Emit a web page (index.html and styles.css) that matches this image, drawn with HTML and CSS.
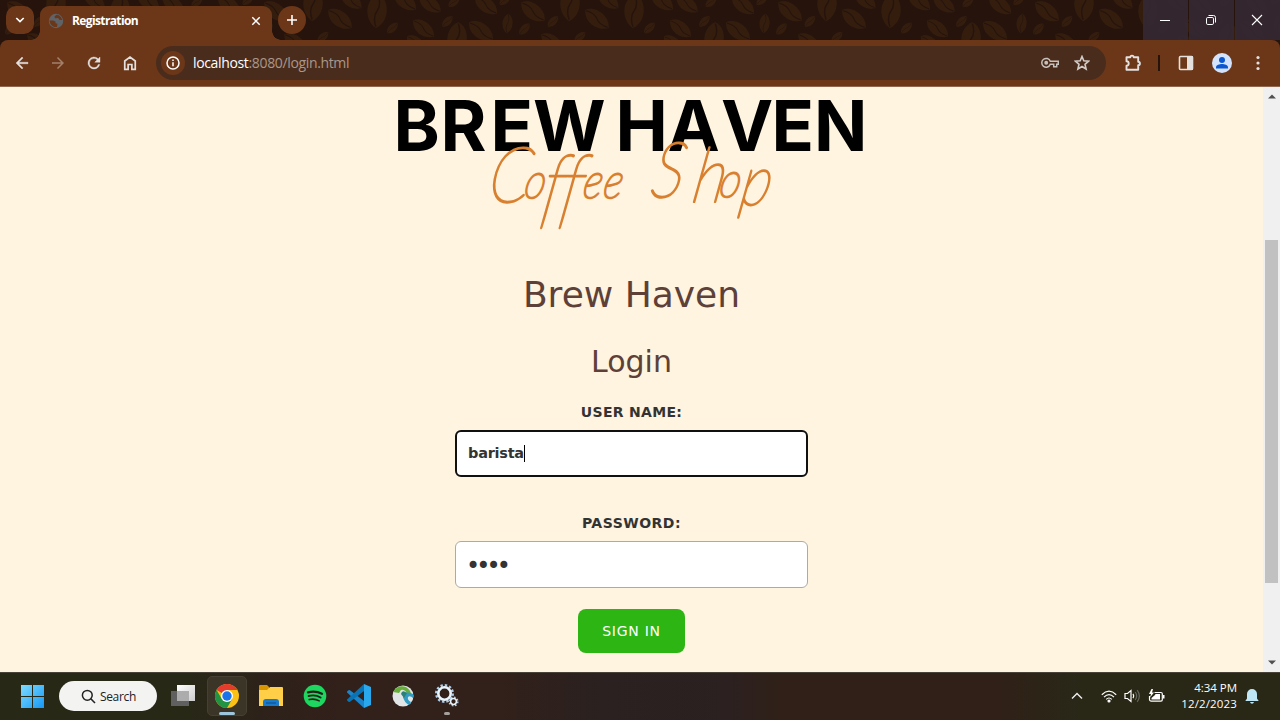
FILE: index.html
```
<!DOCTYPE html>
<html lang="en">
<head>
<meta charset="utf-8">
<title>Registration</title>
<link rel="stylesheet" href="styles.css">
</head>
<body>
<header class="tabstrip">
  <svg class="beans" width="1280" height="48" viewBox="0 0 1280 48">
    <defs>
      <g id="bean"><path d="M-14 0C-10-9 8-10 14 0C8 9-8 10-14 0Z" fill="#351d0e"/><path d="M-13 0Q-5-3 0 0T13 0" fill="none" stroke="#25130c" stroke-width="1.2"/></g>
      <pattern id="tile" x="400" y="0" width="257" height="48" patternUnits="userSpaceOnUse">
        <use href="#bean" transform="translate(23.5 28.5) rotate(38) scale(.93)"/>
        <use href="#bean" transform="translate(47.5 21.5) rotate(-45) scale(.5)"/>
        <use href="#bean" transform="translate(57 39) rotate(95) scale(1.2 1.35)"/>
        <use href="#bean" transform="translate(81 31) rotate(36) scale(1.04)"/>
        <use href="#bean" transform="translate(107.5 23.5) rotate(95) scale(.7)"/>
        <use href="#bean" transform="translate(124.5 29) rotate(-47) scale(.52)"/>
        <use href="#bean" transform="translate(133 11.5) rotate(38) scale(1.05)"/>
        <use href="#bean" transform="translate(153 21.5) rotate(-45) scale(.5)"/>
        <use href="#bean" transform="translate(170 4) rotate(93) scale(1.22 1.35)"/>
        <use href="#bean" transform="translate(197 19) rotate(38) scale(1.05)"/>
        <use href="#bean" transform="translate(180 37) rotate(-42) scale(.5)"/>
        <use href="#bean" transform="translate(234 11) rotate(94) scale(1.22 1.35)"/>
        <use href="#bean" transform="translate(249.5 28) rotate(-45) scale(.52)"/>
        <use href="#bean" transform="translate(152 42) rotate(36) scale(.93)"/>
        <use href="#bean" transform="translate(208 0) rotate(38) scale(.93)"/>
        <use href="#bean" transform="translate(86 5) rotate(38) scale(.98)"/>
        <use href="#bean" transform="translate(54 2) rotate(-42) scale(.5)"/>
        <use href="#bean" transform="translate(30 4) rotate(36) scale(.93)"/>
        <use href="#bean" transform="translate(5 1) rotate(38) scale(.98)"/>
        <use href="#bean" transform="translate(262 1) rotate(38) scale(.98)"/>
        <use href="#bean" transform="translate(105 0) rotate(-42) scale(.5)"/>
        <use href="#bean" transform="translate(16 43) rotate(36) scale(.8)"/>
      </pattern>
    </defs>
    <rect width="1280" height="48" fill="#25130c"/><rect width="1280" height="48" fill="url(#tile)"/>
  </svg>
  <div class="tabsearch"><svg width="10" height="6" viewBox="0 0 10 6"><path d="M1.3 1L5 4.6L8.7 1" fill="none" stroke="#fff" stroke-width="1.7"/></svg></div>
  <div class="tab">
    <svg class="globe" width="16" height="16" viewBox="0 0 16 16"><circle cx="8" cy="8" r="7.2" fill="#5f6368"/><path d="M1.500 7.500h3.500l2.500 1v1.800l2 .5-.5 3.200c-3 .6-7-1.500-7.500-6.500zM8.500 1.800L6.500 3.500 7 5.200l3.200-.2 1 1.800 3 .2C13.500 3.800 11 1.800 8.500 1.800z" fill="#6c3718"/></svg>
    <span class="tabtitle">Registration</span>
    <svg width="10" height="10" viewBox="0 0 10 10"><path d="M1.300 1.300l7.400 7.400M8.700 1.300L1.300 8.700" stroke="#fff" stroke-width="1.500"/></svg>
  </div>
  <div class="newtab"><svg width="12" height="12" viewBox="0 0 12 12"><path d="M6 1v10M1 6h10" stroke="#fff" stroke-width="1.600"/></svg></div>
  <div class="winctl">
    <div class="wbtn"><svg width="12" height="12" viewBox="0 0 12 12"><path d="M1 6.500h10" stroke="#fff"/></svg></div>
    <div class="wbtn"><svg width="12" height="12" viewBox="0 0 12 12" fill="none" stroke="#fff"><rect x="1.500" y="3.500" width="7" height="7" rx="1.300"/><path d="M3.500 1.500h5a2 2 0 0 1 2 2v5"/></svg></div>
    <div class="wbtn"><svg width="12" height="12" viewBox="0 0 12 12"><path d="M1 1l10 10M11 1L1 11" stroke="#fff" stroke-width="1.100"/></svg></div>
  </div>
</header>
<nav class="toolbar">
  <svg class="nav" viewBox="0 0 24 24"><path d="M20 11H7.830l5.590-5.590L12 4l-8 8 8 8 1.410-1.410L7.830 13H20z" fill="#e4e0de" stroke="#e4e0de" stroke-width=".5"/></svg>
  <svg class="nav" viewBox="0 0 24 24"><path d="M12 4l-1.410 1.410L16.170 11H4v2h12.170l-5.580 5.590L12 20l8-8z" fill="#a4806b"/></svg>
  <svg class="nav" viewBox="0 0 24 24"><path d="M17.650 6.350A8 8 0 1 0 19.730 14h-2.080A6 6 0 1 1 12 6c1.660 0 3.140.69 4.220 1.780L13 11h7V4z" fill="#e4e0de" stroke="#e4e0de" stroke-width=".5"/></svg>
  <svg class="nav" viewBox="0 0 24 24"><path d="M5 9.300L12 4l7 5.300V20.500h-4.500v-6.500h-5v6.500H5z" fill="none" stroke="#e4e0de" stroke-width="2.300"/></svg>
  <div class="omni">
    <span class="info"><svg width="14" height="14" viewBox="0 0 14 14"><circle cx="7" cy="7" r="6" fill="none" stroke="#fff" stroke-width="1.500"/><path d="M7 6.300v4M7 3.500v1.500" stroke="#fff" stroke-width="1.500"/></svg></span>
    <span class="url"><b>localhost</b>:8080/login.html</span>
    <svg class="key" width="18" height="12" viewBox="0 0 18 12" fill="none" stroke="#c9c1bc" stroke-width="1.500"><path d="M9.300 4.300H17.300v3h-1.600v2.500h-3V7.300H9.300A4.400 4.400 0 1 1 9.300 4.300z"/><circle cx="5.200" cy="5.800" r="1.200" fill="#c9c1bc"/></svg>
    <svg width="16" height="16" viewBox="0 0 16 16"><path d="M8 1.500l1.800 4.300 4.700.4L11 9.300l1.100 4.700L8 11.500 3.900 14 5 9.300 1.500 6.200l4.700-.4z" fill="none" stroke="#d3cbc6" stroke-width="1.600"/></svg>
  </div>
  <svg class="ext" width="18" height="18" viewBox="0 0 18 18"><path d="M2.500 3.300h3.800a1.700 1.700 0 0 1 3.400 0h4.500v4.500a1.700 1.700 0 0 1 0 3.400v4.500H2.500v-4a2.200 2.200 0 0 0 0-4.400z" fill="none" stroke="#e4e0de" stroke-width="1.900" stroke-linejoin="round"/></svg>
  <span class="divider"></span>
  <svg class="side" width="16" height="16" viewBox="0 0 16 16"><rect x="1.500" y="1.500" width="13" height="13" rx="1" fill="none" stroke="#e4e0de" stroke-width="1.600"/><path d="M9 1h6v14H9z" fill="#e4e0de"/></svg>
  <svg class="avatar" width="20" height="20" viewBox="0 0 20 20"><circle cx="10" cy="10" r="10" fill="#d3e3fd"/><circle cx="10" cy="7" r="3" fill="#0b57d0"/><path d="M4 15.500v-1.300C4 12 7.500 11 10 11s6 1 6 3.200v1.300z" fill="#0b57d0"/></svg>
  <svg class="more" width="4" height="16" viewBox="0 0 4 16" fill="#e4e0de"><circle cx="2" cy="2.500" r="1.600"/><circle cx="2" cy="8" r="1.600"/><circle cx="2" cy="13.500" r="1.600"/></svg>
</nav>
<div class="viewport">
  <main class="page">
    <svg class="logo" width="487" height="154" viewBox="388 87 487 154">
      <text class="brand" x="393.500 440.500 490.500 533" y="152">BREW</text>
      <text class="brand" x="615.500 667.500 721 771.500 814" y="152">HAVEN</text>
      <text class="script" transform="translate(486 203) skewX(-10) scale(.84 1)">C<tspan class="low" x="43" dy="-4">o</tspan><tspan class="tall" x="66 88" dy="19">ff</tspan><tspan class="low" x="113 137" dy="-19">ee</tspan></text>
      <text class="script" transform="translate(649 198) skewX(-10) scale(.85 1)">S<tspan class="cap" x="50" dy="5">h</tspan><tspan class="low" x="81" dy="-5">o</tspan><tspan class="pee" x="107" dy="8">p</tspan></text>
    </svg>
    <h1>Brew Haven</h1>
    <h2>Login</h2>
    <label>USER NAME:</label>
    <div class="field focus"><span class="val">barista</span><i class="caret"></i></div>
    <label class="second">PASSWORD:</label>
    <div class="field"><span class="dots">••••</span></div>
    <button>SIGN IN</button>
  </main>
  <aside class="scroll">
    <svg width="8" height="5" viewBox="0 0 8 5"><path d="M0 4.500L4 .5l4 4z" fill="#505050"/></svg>
    <div class="thumb"></div>
    <svg width="8" height="5" viewBox="0 0 8 5"><path d="M0 .5L4 4.500l4-4z" fill="#505050"/></svg>
  </aside>
</div>
<footer class="taskbar">
  <svg class="win" width="24" height="24" viewBox="0 0 24 24"><defs><linearGradient id="wg" x2="1" y2="1" gradientUnits="objectBoundingBox"><stop stop-color="#7ddcff"/><stop offset="1" stop-color="#1698f5"/></linearGradient></defs><path d="M1 1h11v11H1zM13 1h11v11H13zM1 13h11v11H1zM13 13h11v11H13z" fill="url(#wg)"/></svg>
  <div class="search"><svg width="15" height="15" viewBox="0 0 15 15"><circle cx="6.300" cy="6.300" r="4.900" fill="none" stroke="#222" stroke-width="1.500"/><path d="M9.800 9.800l4.200 4.200" stroke="#222" stroke-width="1.600"/></svg><span>Search</span></div>
  <svg class="tv" width="24" height="24" viewBox="0 0 24 24"><defs><linearGradient id="tg" x2="1" y2="1"><stop stop-color="#fff"/><stop offset="1" stop-color="#ccc"/></linearGradient></defs><path d="M6 1h18v16H6z" fill="url(#tg)"/><path d="M0 7h18v15H0z" fill="#606060"/><path d="M6 7h12v10H6z" fill="#acacac"/></svg>
  <div class="active">
    <svg width="24" height="24" viewBox="0 0 24 24"><circle cx="12" cy="12" r="12" fill="#fbc116"/><path d="M12 12L1.600 6A12 12 0 0 1 22.400 6H12z" fill="#e33b2e"/><path d="M1.600 6A12 12 0 0 0 12 24l5.200-9L12 12 6.800 15z" fill="#229342"/><circle cx="12" cy="12" r="6" fill="#fff"/><circle cx="12" cy="12" r="4.700" fill="#1a73e8"/></svg>
    <i></i>
  </div>
  <svg class="app" width="24" height="24" viewBox="0 0 24 24"><path d="M0 2q0-1 1-1h7l2 2v4H0z" fill="#d99500"/><path d="M0 6h8l3-3h12q1 0 1 1v18H0z" fill="#ffcf48"/><path d="M4 22v-4q0-3 3-3h10q3 0 3 3v4z" fill="#1979ca"/><path d="M7 19h10" stroke="#115b9e" stroke-width="1.500"/></svg>
  <svg class="app" width="24" height="24" viewBox="0 0 24 24"><circle cx="12" cy="12" r="11.300" fill="#1ed760"/><g fill="none" stroke="#24201a" stroke-linecap="round"><path d="M5 8.300q7.500-2 14 1.500" stroke-width="2.300"/><path d="M5.600 12q6.500-1.800 12 1.500" stroke-width="1.900"/><path d="M6.200 15.600q5.400-1.400 10 1.300" stroke-width="1.600"/></g></svg>
  <svg class="app" width="24" height="24" viewBox="0 0 24 24"><path d="M17 17L3 6.200q-.8-.5-1.500 0L.3 7.300q-.6.700 0 1.400L17 24z" fill="#1a85cc"/><path d="M17 0L.3 15.300q-.6.700 0 1.400l1.200 1.100q.7.500 1.500 0L17 7z" fill="#0873b5"/><path d="M17 0l7 3v18l-7 3z" fill="#29a8ee"/></svg>
  <svg class="app" width="24" height="24" viewBox="0 0 24 24"><circle cx="12" cy="12" r="10.500" fill="#e1e5e5"/><path d="M2 8Q7 0 15 3q5 3 5 8l-4-1q-2-5-6-4L8 9z" fill="#67ad39"/><path d="M22 10q-9-4-10 3 1 5 6 8l2-3q-4-2-3-5 2-2 5 1z" fill="#329bc2"/><path d="M10 10q1-5 6-1l-3 5z" fill="#2b817a"/></svg>
  <div class="gears"><svg width="24" height="24" viewBox="0 0 24 24" fill="none"><circle cx="9.500" cy="9.500" r="8.300" stroke="#a9cdea" stroke-width="2.400" stroke-dasharray="2.400 1.950"/><circle cx="9.500" cy="9.500" r="6.200" stroke="#eaf4fc" stroke-width="2.600"/><circle cx="18.500" cy="17.500" r="4.200" stroke="#a9cdea" stroke-width="1.700" stroke-dasharray="1.650 1.650"/><circle cx="18.500" cy="17.500" r="2.900" stroke="#eaf4fc" stroke-width="1.500"/></svg><i></i></div>
  <div class="tray">
    <svg class="chev" width="12" height="8" viewBox="0 0 12 8"><path d="M1 6.500l5-5 5 5" fill="none" stroke="#eee" stroke-width="1.400"/></svg>
    <svg class="wifi" width="16" height="13" viewBox="0 0 16 13" fill="none" stroke="#fff" stroke-width="1.200"><path d="M.8 4.700q7.200-7 14.400 0M3 7.200q5-5 10 0M5.200 9.400q2.800-2.800 5.600 0"/><circle cx="8" cy="11" r="1" fill="#fff"/></svg>
    <svg class="vol" width="17" height="14" viewBox="0 0 17 14" fill="none" stroke="#fff" stroke-width="1.200"><path d="M1 4.500h2.500L7 1.500v11L3.500 9.500H1z"/><path d="M9 4.800q1.500 2.200 0 4.400"/><path d="M11.200 3q3 4 0 8M13.200 1.200q4.300 5.800 0 11.600" stroke="#67665c"/></svg>
    <svg class="bat" width="17" height="14" viewBox="0 0 17 14"><path d="M6.500 3.500H13q1.300 0 1.300 1.300v6q0 1.300-1.300 1.300H3q-1.500 0-1.500-1.500V7" fill="none" stroke="#fff" stroke-width="1.200"/><path d="M7.500 5h4.500v5.500H3.500V9L7 6z" fill="#fff"/><path d="M15 6h1.500v3.500H15zM3.500 0L1 5h2L2 8.500 6 3.500H4L5 0z" fill="#fff"/></svg>
    <div class="clock"><span>4:34 PM</span><span>12/2/2023</span></div>
    <svg class="bell" width="14" height="16" viewBox="0 0 14 16"><path d="M2 10.500V6a5 5 0 0 1 10 0v4.500l1.700 2.500H.3z" fill="#bfe6f4"/><path d="M5 14h4q-.5 1.800-2 1.800T5 14z" fill="#bfe6f4"/></svg>
  </div>
</footer>
</body>
</html>
```
FILE: styles.css
```
* { box-sizing: border-box; }
body { margin: 0; width: 1280px; height: 720px; overflow: hidden; display: flex; flex-direction: column; font-family: "Open Sans", "Noto Sans", sans-serif; background: #25130c; }
svg { display: block; flex: none; }
.tabstrip { position: relative; height: 40px; flex: none; display: flex; }
.beans { position: absolute; left: 0; top: 0; }
.tabsearch, .newtab { position: relative; width: 28px; height: 28px; margin-top: 6px; background: #6c3718; display: flex; align-items: center; justify-content: center; }
.tabsearch { margin-left: 6px; border-radius: 10px; }
.newtab { margin-left: 6px; border-radius: 14px; }
.tab { position: relative; width: 232px; height: 34px; margin: 6px 0 0 6px; padding: 0 11px 5px 8px; border-radius: 9px 9px 0 0; background: #6c3718; display: flex; align-items: center; }
.tab::before, .tab::after { content: ""; position: absolute; bottom: 0; width: 9px; height: 9px; }
.tab::before { left: -9px; background: radial-gradient(circle at 0 0, transparent 8.500px, #6c3718 9px); }
.tab::after { right: -9px; background: radial-gradient(circle at 100% 0, transparent 8.500px, #6c3718 9px); }
.tabtitle { margin-left: 8px; flex: 1; color: #fff; font-size: 12px; font-weight: 700; letter-spacing: -0.620px; }
.winctl { position: relative; margin-left: auto; display: flex; gap: 1px; }
.wbtn { width: 45px; height: 40px; padding-right: 2px; background: rgba(53, 40, 50, .93); display: flex; align-items: center; justify-content: center; }
.toolbar { position: relative; height: 47px; flex: none; background: #6c3718; border-bottom: 1px solid #8f674e; border-radius: 8px 8px 0 0; display: flex; align-items: center; padding-left: 13px; }
.nav { width: 18px; height: 18px; margin-right: 18px; }
.omni { width: 950px; height: 34px; margin-left: -1px; border-radius: 17px; background: #4a2c1d; display: flex; align-items: center; padding: 0 16px 0 5px; }
.info { width: 24px; height: 24px; border-radius: 12px; background: #6c3718; display: flex; align-items: center; justify-content: center; }
.url { flex: 1; margin-left: 8px; font-size: 14px; line-height: 20px; padding-bottom: 1px; letter-spacing: -0.350px; color: #ab9789; }
.url b { font-weight: 400; color: #fff; }
.key { margin-right: 15px; }
.ext { margin-left: 18px; }
.divider { width: 2px; height: 16px; margin-left: 16px; background: #25130c; }
.side { margin-left: 18px; }
.avatar { margin-left: 18px; }
.more { margin-left: 24px; }
.viewport { height: 585px; flex: none; display: flex; }
.page { width: 1263px; background: #fff4e0; display: flex; flex-direction: column; align-items: center; font-family: "DejaVu Sans", sans-serif; }
.logo { margin-top: -1px; overflow: visible; }
.brand { font: 700 70px Inter, "Liberation Sans", sans-serif; fill: #000; }
.script { font: italic 100 77px Lato, sans-serif; fill: #d88030; stroke: #d88030; stroke-width: 2.100px; stroke-linejoin: round; }
.low { font-size: 49px; }
.tall { font-size: 88px; }
.cap { font-size: 76px; }
.pee { font-size: 70px; }
h1, h2 { margin: 0; font-weight: 400; color: #5d4037; }
h1 { margin-top: 34px; font-size: 36px; line-height: 42px; }
h2 { margin-top: 28px; font-size: 30px; line-height: 36px; }
label { margin-top: 23px; font-size: 14px; line-height: 18px; font-weight: 700; letter-spacing: .3px; color: #333; }
.second { margin-top: 37px; letter-spacing: .5px; }
.field { width: 353px; height: 47px; margin-top: 9px; border: 1px solid #aaa; border-radius: 6px; background: #fff; display: flex; align-items: center; padding: 0 12px; color: #333; }
.focus { border: 2px solid #101010; padding: 0 11px; }
.val { font-size: 14.500px; line-height: 18px; padding-bottom: 1px; font-weight: 700; letter-spacing: -0.250px; }
.caret { width: 1px; height: 17px; margin-bottom: 1px; background: #000; }
.dots { font-size: 24px; line-height: 24px; letter-spacing: -3.870px; margin-left: -2px; padding-top: 2px; }
button { width: 107px; height: 44px; margin-top: 21px; border: 0; border-radius: 8px; background: #2db513; color: #fff; font: 14px "DejaVu Sans", sans-serif; letter-spacing: .75px; padding: 0; }
.scroll { width: 17px; background: #f0f0f0; display: flex; flex-direction: column; align-items: center; padding: 7px 0; }
.thumb { width: 13px; height: 343px; margin: 141px 0 auto; background: #c1c1c1; }
.taskbar { height: 48px; flex: none; border-top: 1px solid #494238; background: linear-gradient(90deg, #282817 0, #282817 190px, #2d2219 260px, #32201a 340px, #32201a 500px, #2a2120 600px, #2c2020 730px, #302018 780px, #302018 1000px, #292817 1080px, #292817); display: flex; align-items: center; padding: 0 0 1px 20px; }
.search { width: 98px; height: 30px; margin-left: 15px; border-radius: 15px; background: #f3f3f2; display: flex; align-items: center; padding-left: 22px; color: #222; font-size: 12px; letter-spacing: -0.350px; }
.search span { margin-left: 4px; }
.tv { margin-left: 14px; }
.active { width: 40px; height: 40px; margin-left: 12px; border-radius: 5px; background: #3a3527; border: 1px solid #454032; display: flex; flex-direction: column; align-items: center; padding-top: 7px; }
.active i { width: 16px; height: 3px; margin-top: 4px; border-radius: 2px; background: #9dc6dc; }
.app { margin-left: 20px; }
.active + .app { margin-left: 12px; }
.gears { width: 24px; margin-left: 20px; padding-top: 6px; display: flex; flex-direction: column; align-items: center; }
.gears i { width: 6px; height: 3px; margin-top: 4px; border-radius: 2px; background: #a5a09c; }
.tray { margin-left: auto; padding-right: 21px; display: flex; align-items: center; }
.wifi { margin-left: 18px; }
.vol { margin-left: 7px; }
.bat { margin-left: 7px; }
.clock { width: 72px; display: flex; flex-direction: column; align-items: flex-end; font-size: 11.500px; line-height: 16px; letter-spacing: .150px; color: #fff; }
.clock span:first-child { letter-spacing: -0.050px; }
.bell { margin-left: 8px; }
```
